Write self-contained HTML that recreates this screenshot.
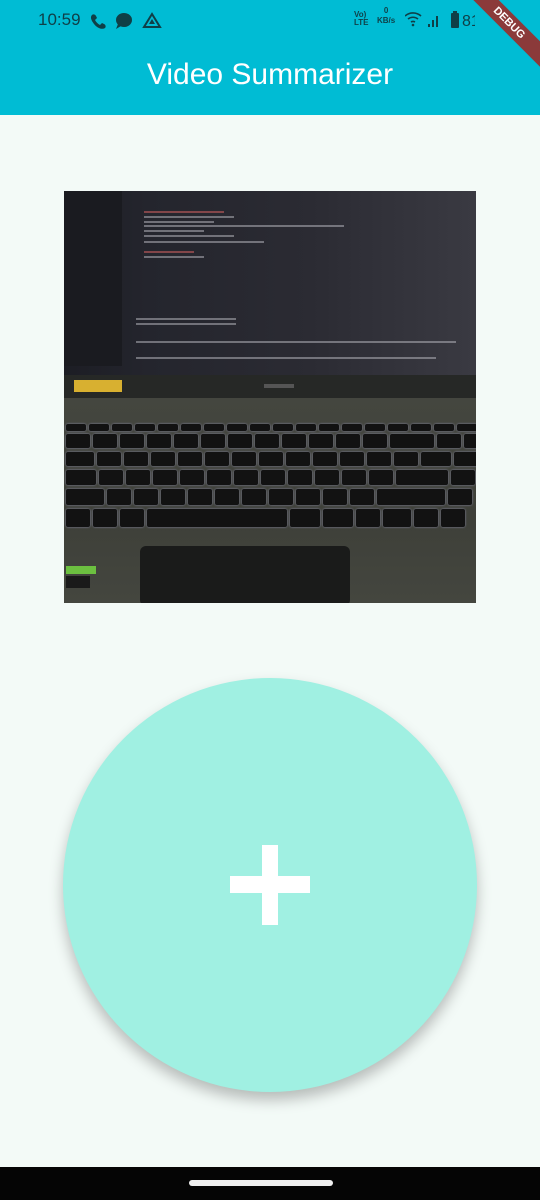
<!DOCTYPE html>
<html><head><meta charset="utf-8"><style>
*{margin:0;padding:0;box-sizing:border-box}
body{width:540px;height:1200px;overflow:hidden;background:#f3faf7;font-family:"Liberation Sans",sans-serif;position:relative}
.bar{position:absolute;left:0;top:0;width:540px;height:115px;background:#00bcd4}
.time{position:absolute;left:38px;top:10px;font-size:17px;color:#0f3f47}
.title{position:absolute;left:0;width:540px;top:58px;text-align:center;color:#fff;font-size:30px}
.debug{position:absolute;right:-34px;top:14px;width:130px;height:18px;background:#8b3a3a;transform:rotate(45deg);color:#fff;font-size:11px;font-weight:bold;text-align:center;line-height:18px}
.img{position:absolute;left:64px;top:191px;width:412px;height:412px;overflow:hidden;background:#3d3f38}
.scr{position:absolute;left:0;top:0;width:412px;height:184px;background:linear-gradient(90deg,#1c1d24 0%,#24252d 20%,#2b2b33 60%,#3a3a42 100%)}
.side{position:absolute;left:0;top:0;width:58px;height:175px;background:#1a1b20}
.bez{position:absolute;left:0;top:184px;width:412px;height:23px;background:#262826}
.kb{position:absolute;left:0;top:207px;width:412px;height:205px;background:linear-gradient(#44463f,#3e4039 60%,#44463f)}
.row{position:absolute;left:2px;display:flex;gap:3px}
.row i{display:block;height:100%;width:24px;background:#121212;border-radius:2px;box-shadow:0 0 2px #8a8aa8}
.pad{position:absolute;left:76px;top:355px;width:210px;height:60px;background:#1a1b1a;border-radius:6px}
.code{position:absolute;height:2px;background:#b0b0b8;opacity:.55}
.circle{position:absolute;left:63px;top:678px;width:414px;height:414px;border-radius:50%;background:#a0f0e2;box-shadow:0 8px 14px rgba(0,0,0,.25)}
.ph{position:absolute;left:230px;top:876px;width:80px;height:17px;background:#fff}
.pv{position:absolute;left:262px;top:845px;width:16px;height:80px;background:#fff}
.nav{position:absolute;left:0;top:1167px;width:540px;height:33px;background:#050505}
.pill{position:absolute;left:189px;top:1180px;width:144px;height:6px;border-radius:3px;background:#f0f0f0}
</style></head><body>
<div class="bar"></div>
<div class="time">10:59</div>
<svg style="position:absolute;left:90px;top:11px" width="80" height="20" viewBox="0 0 80 20">
<path d="M2 4c1-1 3-1 4 1l1 2-2 2c1 2 3 4 5 5l2-2 2 1c2 1 2 3 1 4-3 2-8 0-11-4S0 6 2 4z" fill="#0f3f47"/>
<ellipse cx="34" cy="9" rx="8" ry="7" fill="#0f3f47"/><path d="M28 13l-2 5 5-3z" fill="#0f3f47"/>
<path d="M62 3l8 13h-16z" fill="none" stroke="#0f3f47" stroke-width="2"/><path d="M62 8l3 5h-6z" fill="#0f3f47"/>
</svg>
<div style="position:absolute;left:354px;top:11px;font-size:8px;line-height:8px;color:#0f3f47;font-weight:bold">Vo)<br>LTE</div>
<div style="position:absolute;left:377px;top:6px;font-size:8px;line-height:10px;color:#0f3f47;font-weight:bold;text-align:center">0<br>KB/s</div>
<svg style="position:absolute;left:405px;top:10px" width="70" height="20" viewBox="0 0 70 20">
<path d="M0 6a12 12 0 0 1 16 0M3 9a8 8 0 0 1 10 0M6 12a4 4 0 0 1 4 0" stroke="#0f3f47" stroke-width="1.6" fill="none"/><circle cx="8" cy="15" r="1.3" fill="#0f3f47"/>
<rect x="23" y="14" width="2" height="3" fill="#0f3f47"/><rect x="27" y="10" width="2" height="7" fill="#0f3f47"/><rect x="31" y="6" width="2" height="11" fill="#0f3f47"/>
<rect x="46" y="3" width="8" height="15" rx="1" fill="#0f3f47"/><rect x="48" y="1" width="4" height="2" fill="#0f3f47"/>
<text x="57" y="16" font-size="16" fill="#0f3f47" font-family="Liberation Sans">81</text>
</svg>
<div class="debug">DEBUG</div>
<div class="title">Video Summarizer</div>

<div class="img">
<div class="scr"></div><div class="side"></div>
<div class="code" style="left:80px;top:20px;width:80px;background:#d06060"></div>
<div class="code" style="left:80px;top:25px;width:90px"></div>
<div class="code" style="left:80px;top:30px;width:70px"></div>
<div class="code" style="left:80px;top:34px;width:200px"></div>
<div class="code" style="left:80px;top:39px;width:60px"></div>
<div class="code" style="left:80px;top:44px;width:90px"></div>
<div class="code" style="left:80px;top:50px;width:120px"></div>
<div class="code" style="left:80px;top:60px;width:50px;background:#d06060"></div>
<div class="code" style="left:80px;top:65px;width:60px"></div>
<div class="code" style="left:72px;top:127px;width:100px"></div>
<div class="code" style="left:72px;top:132px;width:100px"></div>
<div class="code" style="left:72px;top:150px;width:320px"></div>
<div class="code" style="left:72px;top:166px;width:300px"></div>
<div class="bez"></div>
<div style="position:absolute;left:10px;top:189px;width:48px;height:12px;background:#d8b030"></div>
<div style="position:absolute;left:200px;top:193px;width:30px;height:4px;background:#555"></div>
<div class="kb"></div>
<div class="row" style="top:233px;height:7px"><i style="width:20px"></i><i style="width:20px"></i><i style="width:20px"></i><i style="width:20px"></i><i style="width:20px"></i><i style="width:20px"></i><i style="width:20px"></i><i style="width:20px"></i><i style="width:20px"></i><i style="width:20px"></i><i style="width:20px"></i><i style="width:20px"></i><i style="width:20px"></i><i style="width:20px"></i><i style="width:20px"></i><i style="width:20px"></i><i style="width:20px"></i><i style="width:20px"></i></div>
<div class="row" style="top:243px;height:14px"><i></i><i></i><i></i><i></i><i></i><i></i><i></i><i></i><i></i><i></i><i></i><i></i><i style="width:44px"></i><i></i><i></i></div>
<div class="row" style="top:261px;height:14px"><i style="width:28px"></i><i></i><i></i><i></i><i></i><i></i><i></i><i></i><i></i><i></i><i></i><i></i><i></i><i style="width:30px"></i><i></i></div>
<div class="row" style="top:279px;height:15px"><i style="width:30px"></i><i></i><i></i><i></i><i></i><i></i><i></i><i></i><i></i><i></i><i></i><i></i><i style="width:52px"></i><i></i></div>
<div class="row" style="top:298px;height:16px"><i style="width:38px"></i><i></i><i></i><i></i><i></i><i></i><i></i><i></i><i></i><i></i><i></i><i style="width:68px"></i><i></i></div>
<div class="row" style="top:318px;height:18px"><i></i><i></i><i></i><i style="width:140px"></i><i style="width:30px"></i><i style="width:30px"></i><i></i><i style="width:28px"></i><i></i><i></i></div>
<div class="pad"></div>
<div style="position:absolute;left:2px;top:375px;width:30px;height:8px;background:#6cc040"></div>
<div style="position:absolute;left:2px;top:385px;width:24px;height:12px;background:#1a1a1a"></div>
</div>

<div class="circle"></div>
<div class="ph"></div><div class="pv"></div>
<div class="nav"></div><div class="pill"></div>
</body></html>
